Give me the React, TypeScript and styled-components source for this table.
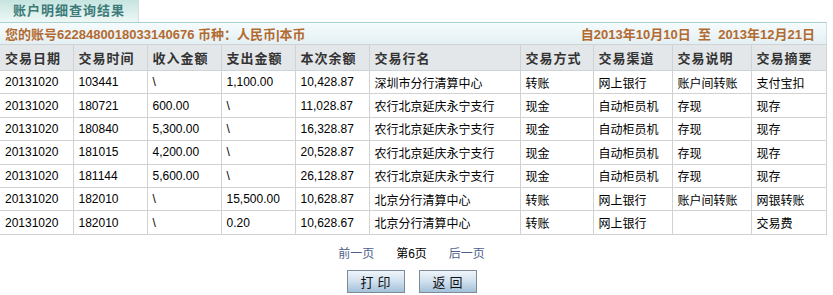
import * as React from 'react'
import styled, { createGlobalStyle } from 'styled-components'

const GlobalStyle = createGlobalStyle`
  body {
    margin: 0;
    background: #fff;
    font-family: "Liberation Sans", "Noto Sans CJK SC", sans-serif;
    font-size: 12px;
    color: #000;
  }
`

const columns = [
  { title: '交易日期', width: 73 },
  { title: '交易时间', width: 74 },
  { title: '收入金额', width: 74 },
  { title: '支出金额', width: 74 },
  { title: '本次余额', width: 74 },
  { title: '交易行名', width: 151 },
  { title: '交易方式', width: 73 },
  { title: '交易渠道', width: 79 },
  { title: '交易说明', width: 79 },
  { title: '交易摘要', width: 75 },
]

const rows = [
  ['20131020', '103441', '\\', '1,100.00', '10,428.87', '深圳市分行清算中心', '转账', '网上银行', '账户间转账', '支付宝扣'],
  ['20131020', '180721', '600.00', '\\', '11,028.87', '农行北京延庆永宁支行', '现金', '自动柜员机', '存现', '现存'],
  ['20131020', '180840', '5,300.00', '\\', '16,328.87', '农行北京延庆永宁支行', '现金', '自动柜员机', '存现', '现存'],
  ['20131020', '181015', '4,200.00', '\\', '20,528.87', '农行北京延庆永宁支行', '现金', '自动柜员机', '存现', '现存'],
  ['20131020', '181144', '5,600.00', '\\', '26,128.87', '农行北京延庆永宁支行', '现金', '自动柜员机', '存现', '现存'],
  ['20131020', '182010', '\\', '15,500.00', '10,628.87', '北京分行清算中心', '转账', '网上银行', '账户间转账', '网银转账'],
  ['20131020', '182010', '\\', '0.20', '10,628.67', '北京分行清算中心', '转账', '网上银行', '', '交易费'],
]

const Page = styled.div`
  width: 827px;
`

const TabBar = styled.div`
  display: flex;
  height: 22px;
`

const Tab = styled.div`
  width: 125px;
  padding-left: 13px;
  height: 22px;
  line-height: 22px;
  font-size: 13px;
  font-weight: bold;
  letter-spacing: 1px;
  color: #3c7b78;
  background: linear-gradient(#c6e4e0, #eef8f6);
  border-right: 1px solid #d4dedd;
  box-sizing: content-box;
`

const InfoBar = styled.div`
  display: flex;
  justify-content: space-between;
  align-items: center;
  height: 21px;
  padding: 0 11px 0 5px;
  border-top: 1px solid #a8d2d2;
  border-right: 1px solid #cde0e4;
  background: linear-gradient(#f6fbfc, #e3f0f4);
  font-size: 13px;
  font-weight: bold;
  color: #b36a30;
`

const Table = styled.table`
  width: 826px;
  border-collapse: collapse;
  table-layout: fixed;
`

const HeadCell = styled.th`
  height: 25px;
  padding: 0 0 0 5px;
  text-align: left;
  font-size: 13px;
  font-weight: bold;
  letter-spacing: 1px;
  color: #333;
  background: #e4e7ea;
  border: 1px solid #cfd3d6;
  border-left: none;
  white-space: nowrap;
  overflow: hidden;
`

const Cell = styled.td`
  height: 22.4px;
  padding: 0 0 0 5px;
  border: 1px solid #d2d2d2;
  border-left: none;
  white-space: nowrap;
  overflow: hidden;
  color: #000;
`

const Pager = styled.div`
  display: flex;
  justify-content: center;
  gap: 22px;
  margin-top: 10px;
  height: 18px;
  line-height: 18px;
  padding-right: 4px;
`

const PagerLink = styled.a<{ $current?: boolean }>`
  color: ${(p) => (p.$current ? '#000' : '#4e5f8e')};
  text-decoration: none;
  cursor: pointer;
`

const Buttons = styled.div`
  display: flex;
  justify-content: center;
  gap: 14px;
  margin-top: 7px;
  padding-right: 4px;
`

const Button = styled.button`
  width: 58px;
  height: 23px;
  padding: 0;
  font-family: "Liberation Sans", "Noto Sans CJK SC", sans-serif;
  font-size: 13px;
  color: #111;
  border: 1px solid #7d8b96;
  background: linear-gradient(#f0f5fa, #cfe0ee 50%, #a3c1da);
  letter-spacing: 4px;
  text-indent: 4px;
  cursor: pointer;
`

export default function App() {
  return (
    <Page>
      <GlobalStyle />
      <TabBar>
        <Tab>账户明细查询结果</Tab>
      </TabBar>
      <InfoBar>
        <span>您的账号6228480018033140676 币种：人民币|本币</span>
        <span>自2013年10月10日&nbsp;&nbsp;至&nbsp;&nbsp;2013年12月21日</span>
      </InfoBar>
      <Table>
        <colgroup>
          {columns.map((c) => (
            <col key={c.title} style={{ width: c.width }} />
          ))}
        </colgroup>
        <thead>
          <tr>
            {columns.map((c) => (
              <HeadCell key={c.title}>{c.title}</HeadCell>
            ))}
          </tr>
        </thead>
        <tbody>
          {rows.map((r, i) => (
            <tr key={i}>
              {r.map((v, j) => (
                <Cell key={j}>{v}</Cell>
              ))}
            </tr>
          ))}
        </tbody>
      </Table>
      <Pager>
        <PagerLink>前一页</PagerLink>
        <PagerLink $current>第6页</PagerLink>
        <PagerLink>后一页</PagerLink>
      </Pager>
      <Buttons>
        <Button>打印</Button>
        <Button>返回</Button>
      </Buttons>
    </Page>
  )
}
